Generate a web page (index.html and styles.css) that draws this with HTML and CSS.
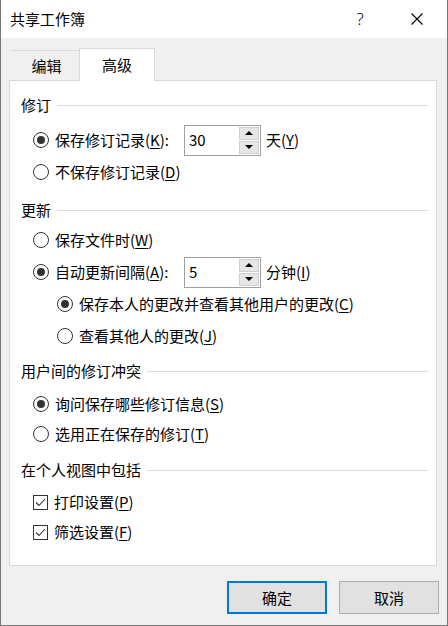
FILE: index.html
```html
<!DOCTYPE html>
<html lang="zh-CN">
<head>
<meta charset="utf-8">
<title>共享工作簿</title>
<link rel="stylesheet" href="styles.css">
</head>
<body>
<div class="window">
  <div class="titlebar">
    <span class="title">共享工作簿</span>
    <span class="tb-help">?</span>
    <span class="tb-close">
      <svg width="12" height="12" viewBox="0 0 12 12"><path d="M0.5 0.5 L11.5 11.5 M11.5 0.5 L0.5 11.5" stroke="#000" stroke-width="1.1" fill="none"/></svg>
    </span>
  </div>
  <div class="body">
    <div class="tabs">
      <div class="tab">编辑</div>
      <div class="tab active">高级</div>
    </div>
    <div class="panel">
      <div class="section sec-revise">
        <div class="heading">修订</div>
        <div class="row">
          <span class="radio on"></span>
          <span class="lbl-fixed">保存修订记录(<u>K</u>):</span>
          <span class="spin"><span class="spin-val">30</span><span class="spin-btns"><span class="spin-btn up"></span><span class="spin-btn down"></span></span></span>
          <span>天(<u>Y</u>)</span>
        </div>
        <div class="row">
          <span class="radio"></span>
          <span>不保存修订记录(<u>D</u>)</span>
        </div>
      </div>
      <div class="section sec-update">
        <div class="heading">更新</div>
        <div class="row">
          <span class="radio"></span>
          <span>保存文件时(<u>W</u>)</span>
        </div>
        <div class="row">
          <span class="radio on"></span>
          <span class="lbl-fixed">自动更新间隔(<u>A</u>):</span>
          <span class="spin"><span class="spin-val">5</span><span class="spin-btns"><span class="spin-btn up"></span><span class="spin-btn down"></span></span></span>
          <span>分钟(<u>I</u>)</span>
        </div>
        <div class="row sub">
          <span class="radio on"></span>
          <span>保存本人的更改并查看其他用户的更改(<u>C</u>)</span>
        </div>
        <div class="row sub">
          <span class="radio"></span>
          <span>查看其他人的更改(<u>J</u>)</span>
        </div>
      </div>
      <div class="section sec-conflict">
        <div class="heading">用户间的修订冲突</div>
        <div class="row">
          <span class="radio on"></span>
          <span>询问保存哪些修订信息(<u>S</u>)</span>
        </div>
        <div class="row">
          <span class="radio"></span>
          <span>选用正在保存的修订(<u>T</u>)</span>
        </div>
      </div>
      <div class="section sec-view">
        <div class="heading">在个人视图中包括</div>
        <div class="row">
          <span class="check"><svg width="13" height="13" viewBox="0 0 13 13"><polyline points="2,6.5 5,9.5 11,3" fill="none" stroke="#333" stroke-width="1.1"/></svg></span>
          <span>打印设置(<u>P</u>)</span>
        </div>
        <div class="row">
          <span class="check"><svg width="13" height="13" viewBox="0 0 13 13"><polyline points="2,6.5 5,9.5 11,3" fill="none" stroke="#333" stroke-width="1.1"/></svg></span>
          <span>筛选设置(<u>F</u>)</span>
        </div>
      </div>
    </div>
    <div class="footer">
      <button class="btn primary">确定</button>
      <button class="btn">取消</button>
    </div>
  </div>
</div>
</body>
</html>
```
FILE: styles.css
```css
* { box-sizing: border-box; margin: 0; padding: 0; }
html, body { width: 448px; height: 626px; overflow: hidden; }
body {
  font-family: "Noto Sans CJK SC", "Microsoft YaHei", sans-serif;
  font-size: 15px;
  color: #000;
  background: #fff;
}
.window {
  width: 448px;
  height: 626px;
  display: flex;
  flex-direction: column;
  border: 1px solid #777;
  border-top: none;
  background: #f0f0f0;
}
.titlebar {
  height: 38px;
  flex: none;
  background: #fff;
  display: flex;
  align-items: center;
  padding-left: 9px;
}
.title { line-height: 20px; }
.tb-help {
  margin-left: auto;
  width: 54px;
  text-align: center;
  font-family: "Noto Sans", sans-serif;
  font-size: 17px;
  font-weight: 300;
  line-height: 20px;
}
.tb-close {
  width: 60px;
  display: flex;
  justify-content: center;
  align-items: center;
}
.tb-close svg { display: block; }
.body {
  flex: 1;
  padding: 10px 10px 0 8px;
  display: flex;
  flex-direction: column;
}
.tabs {
  display: flex;
  align-items: flex-end;
  height: 33px;
  flex: none;
  margin-bottom: -1px;
  padding-left: 2px;
}
.tab {
  height: 31px;
  width: 68px;
  border-top: 1px solid #d9d9d9;
  display: flex;
  align-items: center;
  justify-content: center;
  padding-left: 3px;
  line-height: 20px;
}
.tab.active {
  height: 33px;
  width: 76px;
  padding-left: 0;
  border: 1px solid #d9d9d9;
  border-bottom: none;
  background: #fff;
  position: relative;
  z-index: 1;
}
.panel {
  flex: none;
  height: 486px;
  border: 1px solid #d9d9d9;
  background: #fff;
  padding: 14px 8px 0 11px;
}
.section { display: flex; flex-direction: column; }
.section .heading { margin-bottom: var(--hg); }
.section .row + .row { margin-top: var(--rg); }
.sec-revise { --hg: 10px; --rg: 2px; }
.sec-update { margin-top: 13px; --hg: 5px; --rg: 2px; }
.sec-conflict { margin-top: 10px; --hg: 8px; --rg: 0px; }
.sec-view { margin-top: 11px; --hg: 7px; --rg: 0px; }
.heading {
  height: 20px;
  display: flex;
  align-items: center;
  line-height: 20px;
  white-space: nowrap;
}
.heading::after {
  content: "";
  flex: 1;
  height: 1px;
  background: #dcdcdc;
  margin-left: 6px;
}
.row {
  height: 30px;
  display: flex;
  align-items: center;
  padding-left: 12px;
  line-height: 20px;
  white-space: nowrap;
}
.row.sub { padding-left: 36px; }
u { text-decoration: underline; text-underline-offset: 2px; text-decoration-thickness: 1px; }
.radio {
  width: 16px;
  height: 16px;
  flex: none;
  border: 1px solid #333;
  border-radius: 50%;
  background: #fff;
  margin-right: 6px;
  display: flex;
  align-items: center;
  justify-content: center;
}
.radio.on::after {
  content: "";
  width: 8px;
  height: 8px;
  border-radius: 50%;
  background: #333;
}
.check {
  width: 15px;
  height: 15px;
  flex: none;
  border: 1px solid #333;
  background: #fff;
  margin-right: 6px;
  display: flex;
  align-items: center;
  justify-content: center;
}
.check svg { display: block; }
.lbl-fixed { width: 129px; flex: none; }
.spin {
  width: 77px;
  height: 31px;
  flex: none;
  border: 1px solid #a0a0a0;
  background: #fff;
  display: flex;
  margin-right: 5px;
}
.spin-val {
  flex: 1;
  padding-left: 4px;
  display: flex;
  align-items: center;
}
.spin-btns {
  width: 20px;
  display: flex;
  flex-direction: column;
  gap: 1px;
  padding: 1px 0;
  margin-right: 1px;
}
.spin-btn {
  flex: 1;
  background: #e6e6e6;
  border: 1px solid #cfcfcf;
  display: flex;
  align-items: center;
  justify-content: center;
}
.spin-btn.up::after {
  content: "";
  border-left: 4px solid transparent;
  border-right: 4px solid transparent;
  border-bottom: 4px solid #000;
}
.spin-btn.down::after {
  content: "";
  border-left: 4px solid transparent;
  border-right: 4px solid transparent;
  border-top: 4px solid #000;
}
.footer {
  display: flex;
  justify-content: flex-end;
  gap: 12px;
  margin-top: 15px;
  margin-right: -2px;
}
.btn {
  width: 100px;
  height: 33px;
  background: #e1e1e1;
  border: 1px solid #adadad;
  display: flex;
  align-items: center;
  justify-content: center;
  font: inherit;
  color: #000;
  line-height: 20px;
}
.btn.primary { border: 2px solid #0078d7; }
```
